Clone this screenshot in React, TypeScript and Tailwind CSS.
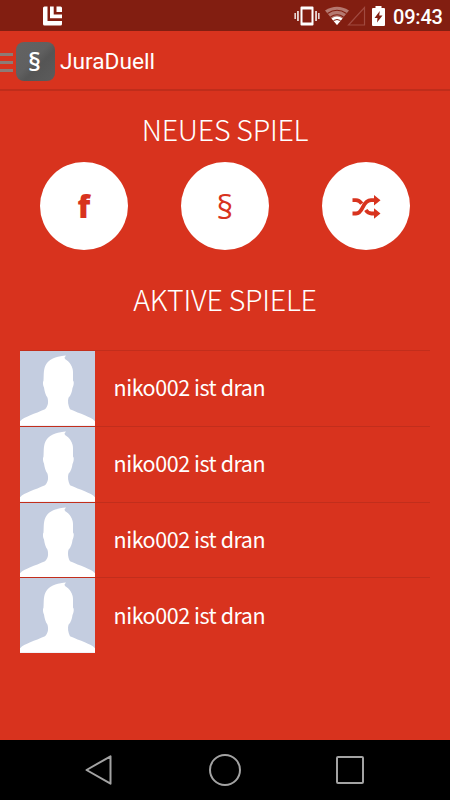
const FONT = "font-['Noto_Sans_CJK_SC','Noto_Sans',sans-serif]"

const games = [
  { id: 1, player: 'niko002' },
  { id: 2, player: 'niko002' },
  { id: 3, player: 'niko002' },
  { id: 4, player: 'niko002' },
]

function StatusBar() {
  return (
    <div className="h-[31px] bg-[#821e11] flex items-center text-white">
      <svg className="ml-[43px] w-[19px] h-[20px]" viewBox="0 0 19 20" fill="#fff">
        <path d="M1.500 0.500H4.500V15H19v3q0 1.500-1.500 1.500h-16Q0 19.500 0 18V2Q0 0.500 1.500 0.500Z" />
        <path d="M7 0.500h3.700v8H19v3.800H7Z" />
        <path d="M13.500 0.500h4q1.500 0 1.500 1.500v4h-5.500Z" />
      </svg>
      <div className="ml-auto flex items-center">
        <svg className="w-[26px] h-5" viewBox="0 0 26 20" fill="#fff">
          <path fillRule="evenodd" d="M7.500 0.500h11q1 0 1 1v17q0 1-1 1h-11q-1 0-1-1v-17q0-1 1-1ZM8.500 3.500v13h9V3.500Z" />
          <path d="M0.500 7h1.300v6H0.500ZM3.200 5h1.500v10H3.200ZM21.300 5h1.500v10h-1.500ZM24.200 7h1.300v6h-1.300Z" />
        </svg>
        <svg className="ml-[5px] w-[24px] h-5" viewBox="0 0 24 20">
          <path d="M12 19 0 4.500Q12-3 24 4.500Z" fill="#b57870" />
          <path d="M2.500 7.500Q12 1 21.500 7.500M5.500 11Q12 6.500 18.500 11" fill="none" stroke="#821e11" strokeWidth="1.200" />
          <path d="M12 19 6.500 12.500Q12 8.500 17.500 12.500Z" fill="#fff" />
          <path d="M8.500 14.500Q12 12.500 15.500 14.500" fill="none" stroke="#821e11" strokeWidth="1" />
        </svg>
        <svg className="-ml-[2px] w-[19px] h-5" viewBox="0 0 19 20">
          <path d="M1.500 19H17.500V1.500Z" fill="none" stroke="#a04a40" strokeWidth="1.200" />
        </svg>
        <svg className="ml-[6px] w-[13px] h-5" viewBox="0 0 13 20">
          <path d="M3.500 0h6v2H12q1 0 1 1v16q0 1-1 1H1q-1 0-1-1V3q0-1 1-1h2.500Z" fill="#fff" />
          <path d="M7.800 5 2.500 12h3L5 16.500l5.500-7H7.200Z" fill="#821e11" />
        </svg>
        <span className="ml-[8px] mr-[7px] mt-[2px] w-[50px] font-['Roboto',sans-serif] font-medium text-[20px] leading-5 tracking-[-0.2px] whitespace-nowrap">
          09:43
        </span>
      </div>
    </div>
  )
}

function ActionBar() {
  return (
    <div className="h-[60px] border-b-2 border-[#bf2d1b] flex items-center">
      <div className="w-[13px] flex flex-col gap-[5px] mt-[4px]">
        <div className="h-[3px] bg-[#8d7b76]" />
        <div className="h-[3px] bg-[#8d7b76]" />
        <div className="h-[3px] bg-[#8d7b76]" />
      </div>
      <div className="ml-[3px] mt-[3px] w-[39px] h-[39px] rounded-[8px] bg-[linear-gradient(135deg,#636363_0%,#606060_45%,#555_60%,#5c5c5c_100%)] flex items-center justify-center overflow-hidden">
        <span className="-mt-px -ml-[2px] text-white font-semibold text-[26px] leading-none font-['Open_Sans',sans-serif]">§</span>
      </div>
      <h1 className="ml-[5px] mt-[5px] text-white font-['Roboto',sans-serif] text-[22.7px] leading-none">JuraDuell</h1>
    </div>
  )
}

function ShuffleIcon() {
  return (
    <svg className="mt-px w-[29px] h-6" viewBox="0 0 28 24">
      <g fill="none" stroke="#d8331e" strokeWidth="3.800">
        <path d="M0 5.200h3.500q3.200 0 5.800 3.500M13.300 15q2.300 3.500 5.700 3.500h4" />
        <path d="M0 18.500h3.500q3.800 0 7-6.600t8-6.700h4.500" />
      </g>
      <path d="M21.500 0 28 5.200l-6.500 5.300ZM21.500 13.200 28 18.500l-6.500 5.300Z" fill="#d8331e" />
    </svg>
  )
}

function RoundButton({ children }: { children: React.ReactNode }) {
  return (
    <button className="w-[88px] h-[88px] rounded-full bg-white text-[#d8331e] flex items-center justify-center">
      {children}
    </button>
  )
}

function Avatar() {
  return (
    <svg className="w-[75px] h-full shrink-0 bg-[#c4cde0]" viewBox="0 0 75 75" preserveAspectRatio="none">
      <path
        fill="#fff"
        d="M0 75V70.500C4 66 15 63 25 58.500C28.500 55 28.500 51 27.500 47C25.500 44 24.500 40 24 36.500C23 35 22.500 31 23.500 29.500C24 24 23 17 27 12C31 7 39 5 46 4.500L44.500 6.500L45 8C50 11 53 16 53 21V29.500C54.500 31 53.500 35 52.500 37C52 41 51 44 48.500 47C47.500 50 48 55 50 58.500C60 63 71 66 75 70.500V75Z"
      />
    </svg>
  )
}

function NavBar() {
  return (
    <div className="h-[60px] bg-black flex items-center justify-between pl-[84px] pr-[86px]">
      <svg className="w-[30px] h-8" viewBox="0 0 30 32" fill="none" stroke="#a3a3a3" strokeWidth="2" strokeLinejoin="round">
        <path d="M2.500 16 26.500 2.300V29.700Z" />
      </svg>
      <div className="w-8 h-8 rounded-full border-2 border-[#a3a3a3]" />
      <div className="w-[28px] h-[28px] rounded-[2px] border-2 border-[#a3a3a3]" />
    </div>
  )
}

export default function App() {
  return (
    <div className={`w-[450px] h-[800px] bg-[#d8331e] flex flex-col overflow-hidden ${FONT}`}>
      <StatusBar />
      <ActionBar />

      <main className="flex-1 px-5 text-white">
        <h2 className="pt-[22px] text-center text-[28.6px] leading-[32px] tracking-[-0.25px] font-light">NEUES SPIEL</h2>
        <div className="mt-[17px] px-5 flex justify-between">
          <RoundButton>
            <span className="mt-px font-['Open_Sans',sans-serif] font-extrabold text-[31px] leading-none">f</span>
          </RoundButton>
          <RoundButton>
            <span className="mt-px font-['Open_Sans',sans-serif] font-medium text-[33px] leading-none">§</span>
          </RoundButton>
          <RoundButton>
            <ShuffleIcon />
          </RoundButton>
        </div>

        <h2 className="mt-[33px] text-center text-[28.6px] leading-[32px] tracking-[-0.25px] font-light">AKTIVE SPIELE</h2>
        <ul className="mt-[35px]">
          {games.map((game) => (
            <li key={game.id} className="h-[75.8px] border-t border-[#c22e1c] flex items-center">
              <Avatar />
              <span className="ml-[18.5px] -mt-[3px] text-[21.5px] leading-none tracking-[-0.45px]">{game.player} ist dran</span>
            </li>
          ))}
        </ul>
      </main>

      <NavBar />
    </div>
  )
}
